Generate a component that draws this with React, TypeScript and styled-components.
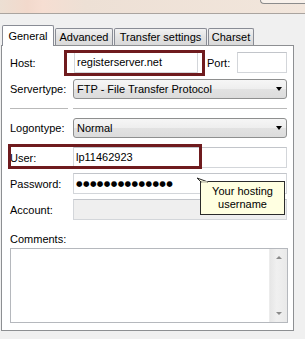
import React from 'react'
import styled, { createGlobalStyle } from 'styled-components'

const GlobalStyle = createGlobalStyle`
  html, body {
    margin: 0;
    padding: 0;
  }
  body {
    width: 305px;
    height: 339px;
    overflow: hidden;
    background: #f0f0f0;
    font-family: "Liberation Sans", Arial, sans-serif;
    font-size: 11px;
    color: #000;
  }
`

const Window = styled.div`
  width: 305px;
  height: 339px;
  display: flex;
  flex-direction: column;
  background: #f0f0f0;
`

const TitleStrip = styled.div`
  height: 13px;
  border-bottom: 1px solid #aaa49f;
  background: linear-gradient(90deg, #ecdfd3 0%, #f2d9cc 9%, #f6ded2 14%, #ede0d5 28%, #f2e6dc 100%);
  display: flex;
  justify-content: flex-end;
  align-items: flex-start;
`

const CornerButton = styled.div`
  width: 44px;
  height: 3px;
  border: 1px solid #8c8c8c;
  border-top: none;
  border-right: none;
  border-radius: 0 0 0 4px;
  background: #f8f1eb;
`

const TabRow = styled.div`
  display: flex;
  align-items: flex-end;
  gap: 1px;
  height: 21px;
  margin-top: 11px;
  margin-bottom: -1px;
  padding-left: 2px;
  position: relative;
  z-index: 1;
`

const Tab = styled.div<{ $active?: boolean; $w: number }>`
  box-sizing: border-box;
  width: ${p => p.$w}px;
  height: ${p => (p.$active ? '21px' : '17px')};
  margin-bottom: ${p => (p.$active ? '0' : '1px')};
  padding-top: ${p => (p.$active ? '3px' : '1px')};
  border: 1px solid #898c95;
  border-bottom: none;
  border-radius: 2px 2px 0 0;
  background: ${p => (p.$active ? '#fff' : 'linear-gradient(#f2f2f2, #e3e3e3 50%, #d9d9d9)')};
  line-height: 14px;
  text-align: center;
  white-space: nowrap;
`

const Panel = styled.div`
  box-sizing: border-box;
  width: 293px;
  height: 286px;
  margin-left: 1px;
  border: 1px solid #8d8f92;
  background: #fff;
  padding: 6px 6px 0 8px;
  display: flex;
  flex-direction: column;
`

const Row = styled.div<{ $mt: number }>`
  display: flex;
  align-items: center;
  margin-top: ${p => p.$mt}px;
  position: relative;
`

const Label = styled.div`
  width: 63px;
  flex: none;
  line-height: 14px;
  white-space: nowrap;
`

const Field = styled.div<{ $disabled?: boolean; $width?: number }>`
  box-sizing: border-box;
  height: 21px;
  ${p => (p.$width ? `width: ${p.$width}px; flex: none;` : 'flex: 1;')}
  border: 1px solid #d3d6da;
  border-top-color: #c2c5ca;
  background: ${p => (p.$disabled ? '#efefef' : '#fff')};
  padding: 0 2px;
  line-height: 19px;
  white-space: nowrap;
  position: relative;
`

const Dots = styled.span`
  font-family: "DejaVu Sans", sans-serif;
  font-size: 7.5px;
  letter-spacing: 0.4px;
  vertical-align: 1px;
`

const Select = styled.div`
  box-sizing: border-box;
  flex: 1;
  height: 20px;
  border: 1px solid #8e8f8f;
  border-radius: 3px;
  background: linear-gradient(#f6f6f6, #eeeeee 50%, #e2e2e2 51%, #dcdcdc);
  display: flex;
  align-items: center;
  justify-content: space-between;
  padding: 0 4px 0 3px;
  line-height: 18px;
  white-space: nowrap;
`

const Arrow = styled.span`
  width: 0;
  height: 0;
  border-left: 3.5px solid transparent;
  border-right: 3.5px solid transparent;
  border-top: 4px solid #000;
`

const PortLabel = styled.div`
  width: 30px;
  flex: none;
  margin-left: 9px;
  line-height: 14px;
`

const HostWrap = styled.div`
  position: relative;
  width: 124px;
  flex: none;
  margin-left: 1px;
`

const Highlight = styled.div<{ $l: number; $t: number; $w: number; $h: number }>`
  position: absolute;
  left: ${p => p.$l}px;
  top: ${p => p.$t}px;
  width: ${p => p.$w}px;
  height: ${p => p.$h}px;
  box-sizing: border-box;
  border: 3px solid #6f1b1e;
  pointer-events: none;
`

const Separator = styled.div`
  display: flex;
  gap: 5px;
  margin-top: 9px;
  height: 1px;
`

const Line = styled.div<{ $width?: number }>`
  height: 1px;
  background: #b9b9b9;
  ${p => (p.$width ? `width: ${p.$width}px;` : 'flex: 1;')}
`

const Tooltip = styled.div`
  position: absolute;
  left: 190px;
  top: 8px;
  width: 85px;
  height: 34px;
  box-sizing: border-box;
  border: 1px solid #2b2b2b;
  background: #ffffe1;
  text-align: center;
  line-height: 13px;
  padding-top: 3px;
  z-index: 2;
`

const Tail = styled.svg`
  position: absolute;
  left: -5px;
  top: -5px;
  overflow: visible;
`

const CommentsLabel = styled.div`
  margin-top: 12px;
  line-height: 14px;
`

const TextArea = styled.div`
  box-sizing: border-box;
  margin-top: 2px;
  width: 278px;
  height: 75px;
  border: 1px solid #b5b8bd;
  background: #fff;
  display: flex;
  justify-content: flex-end;
`

const ScrollBar = styled.div`
  width: 17px;
  background: linear-gradient(90deg, #e6e6e6, #f0f0f0 40%, #e9e9e9);
  border-left: 1px solid #ececec;
  display: flex;
  flex-direction: column;
  justify-content: space-between;
  align-items: center;
  padding: 7px 0 7px;
`

const ScrollArrow = styled.span<{ $down?: boolean }>`
  width: 0;
  height: 0;
  border-left: 3px solid transparent;
  border-right: 3px solid transparent;
  ${p => (p.$down ? 'border-top: 3px solid #8a8a8a;' : 'border-bottom: 3px solid #8a8a8a;')}
`

export default function App() {
  return (
    <Window>
      <GlobalStyle />
      <TitleStrip>
        <CornerButton />
      </TitleStrip>

      <TabRow>
        <Tab $active $w={52}>General</Tab>
        <Tab $w={58}>Advanced</Tab>
        <Tab $w={93}>Transfer settings</Tab>
        <Tab $w={46}>Charset</Tab>
      </TabRow>

      <Panel>
        <Row $mt={0}>
          <Label>Host:</Label>
          <HostWrap>
            <Field>registerserver.net</Field>
            <Highlight $l={-10} $t={-2} $w={141} $h={26} />
          </HostWrap>
          <PortLabel>Port:</PortLabel>
          <Field $width={50} />
        </Row>

        <Row $mt={6}>
          <Label>Servertype:</Label>
          <Select>
            <span>FTP - File Transfer Protocol</span>
            <Arrow />
          </Select>
        </Row>

        <Separator>
          <Line $width={58} />
          <Line />
        </Separator>

        <Row $mt={9}>
          <Label>Logontype:</Label>
          <Select>
            <span>Normal</span>
            <Arrow />
          </Select>
        </Row>

        <Row $mt={9}>
          <Label>User:</Label>
          <Field>lp11462923</Field>
          <Highlight $l={-2} $t={-3} $w={194} $h={25} />
        </Row>

        <Row $mt={5}>
          <Label>Password:</Label>
          <Field>
            <Dots>●●●●●●●●●●●●●●</Dots>
          </Field>
          <Tooltip>
            <Tail width="12" height="6">
              <polygon points="1,1 5,5 12,5" fill="#ffffe1" stroke="#2b2b2b" strokeWidth="1" />
              <line x1="5.5" y1="5" x2="11.5" y2="5" stroke="#ffffe1" strokeWidth="1.2" />
            </Tail>
            Your hosting
            <br />
            username
          </Tooltip>
        </Row>

        <Row $mt={5}>
          <Label>Account:</Label>
          <Field $disabled />
        </Row>

        <CommentsLabel>Comments:</CommentsLabel>
        <TextArea>
          <ScrollBar>
            <ScrollArrow />
            <ScrollArrow $down />
          </ScrollBar>
        </TextArea>
      </Panel>
    </Window>
  )
}
